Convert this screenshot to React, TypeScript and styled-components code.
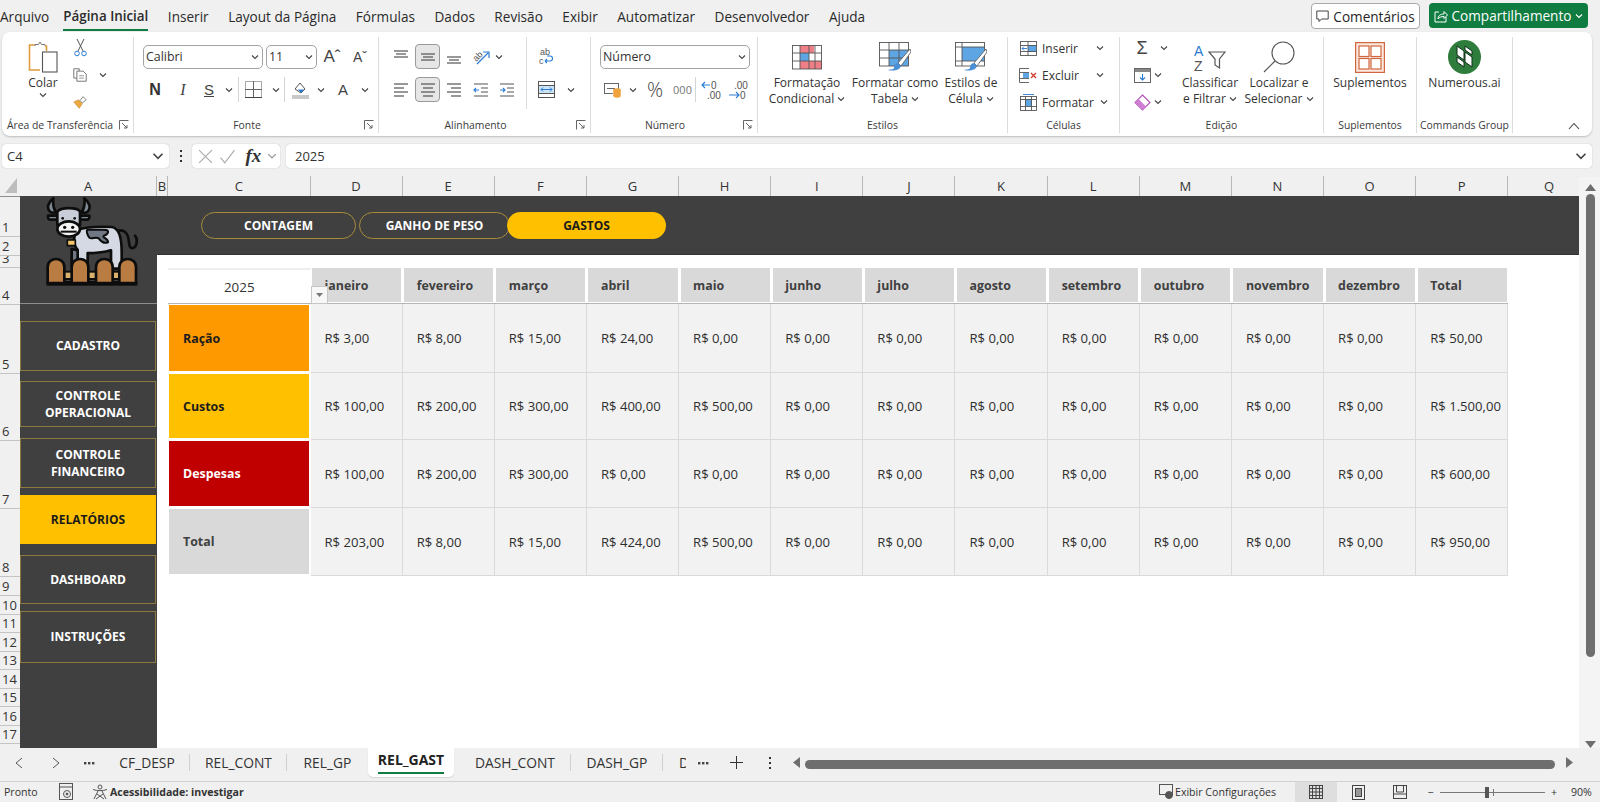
import React from "react";
import styled, { createGlobalStyle } from "styled-components";

const UI = '"Open Sans", "Noto Sans", "Liberation Sans", sans-serif';

const Global = createGlobalStyle`
  html, body { margin: 0; padding: 0; background: #f0f0f0; }
  #root { width: 1600px; height: 802px; overflow: hidden; }
  * { box-sizing: border-box; }
`;

const Page = styled.div`
  width: 1600px; height: 802px; display: flex; flex-direction: column;
  background: #f0f0f0; font-family: ${UI}; color: #262626; overflow: hidden;
`;

/* ---------- title tabs ---------- */
const MenuBar = styled.div`
  height: 32px; display: flex; align-items: flex-start; justify-content: space-between; padding-right: 12px;
`;
const MenuList = styled.div`display: flex; gap: 19.5px; height: 32px;`;
const MenuItem = styled.div<{ $active?: boolean }>`
  height: 31px; line-height: 33px; font-size: ${p => (p.$active ? 13.4 : 13.6)}px; white-space: nowrap;
  font-weight: ${p => (p.$active ? 600 : 400)};
  border-bottom: ${p => (p.$active ? "2px solid #107c41" : "2px solid transparent")};
  color: #2b2b2b;
  &:first-child { margin-right: -5.5px; }
`;
const MenuActions = styled.div`display: flex; gap: 9px; padding-top: 3px;`;
const CommentBtn = styled.div`
  width: 109px; height: 26px; border: 1px solid #a9a9a9; border-radius: 4px; background: #fff;
  display: flex; align-items: center; justify-content: center; gap: 4px; font-size: 13.6px;
`;
const ShareBtn = styled.div`
  width: 159px; height: 25px; border-radius: 4px; background: #107c41; color: #fff;
  display: flex; align-items: center; justify-content: center; gap: 4px; font-size: 13.6px;
`;

/* ---------- ribbon ---------- */
const Ribbon = styled.div`
  margin: 0 8px 0 2px; height: 104px; background: #fff; border-radius: 8px;
  box-shadow: 0 1px 2px rgba(0,0,0,.22); display: flex; padding-top: 5px;
`;
const Group = styled.div<{ $w: number; $last?: boolean }>`
  width: ${p => p.$w}px; height: 96px; display: flex; flex-direction: column;
  border-right: ${p => (p.$last ? "none" : "1px solid #dcdcdc")}; flex: none;
`;
const GroupBody = styled.div`flex: 1; display: flex; min-height: 0;`;
const GroupFoot = styled.div<{ $pl?: number }>`height: 16px; display: flex; align-items: center; padding-left: ${p => p.$pl || 0}px;`;
const GroupLabel = styled.div`
  flex: 1; text-align: center; font-size: 10.4px; color: #3a3a3a; white-space: nowrap; line-height: 17px;
`;
const LauncherBox = styled.div`width: 18px; display: flex; justify-content: center; align-items: center;`;
const Large = styled.div<{ $w: number; $pl?: number }>`
  width: ${p => p.$w}px; flex: none; display: flex; flex-direction: column; align-items: center; padding-top: 2px;
  padding-left: ${p => p.$pl || 0}px;
`;
const LargeIcon = styled.div`height: 36px; display: flex; align-items: center; justify-content: center;`;
const LargeText = styled.div`
  font-size: 12px; line-height: 16px; white-space: nowrap; color: #333; display: flex; align-items: center; gap: 3px;
`;
const Stack = styled.div<{ $w: number; $pl?: number }>`
  width: ${p => p.$w}px; flex: none; display: flex; flex-direction: column; gap: 5px; padding-left: ${p => p.$pl || 0}px;
`;
const StackRow = styled.div`height: 22px; display: flex; align-items: center;`;
const StackText = styled.span<{ $w: number }>`
  width: ${p => p.$w}px; font-size: 12px; color: #333; white-space: nowrap;
`;
const Rows = styled.div<{ $w?: number; $pl?: number; $sep?: boolean }>`
  width: ${p => (p.$w ? `${p.$w}px` : "auto")}; flex: none; display: flex; flex-direction: column; gap: 8px;
  padding-top: 7px; padding-left: ${p => p.$pl || 0}px;
  border-right: ${p => (p.$sep ? "1px solid #dcdcdc" : "none")}; height: 72px;
`;
const ToolRow = styled.div`height: 25px; display: flex; align-items: center;`;
const Slot = styled.div<{ $w: number; $on?: boolean; $sep?: boolean }>`
  width: ${p => p.$w}px; height: 25px; flex: none; display: flex; align-items: center; justify-content: center;
  font-size: 14px; color: #333;
  border: ${p => (p.$on ? "1px solid #9a9a9a" : "none")};
  background: ${p => (p.$on ? "#e6e6e6" : "transparent")};
  border-radius: ${p => (p.$on ? "4px" : "0")};
  border-right: ${p => (p.$sep ? "1px solid #d4d4d4" : undefined)};
`;
const Select = styled.div<{ $w: number; $mr?: number }>`
  width: ${p => p.$w}px; height: 24px; margin-right: ${p => p.$mr || 0}px; flex: none;
  border: 1px solid #a3a3a3; border-radius: 5px; background: #fff; display: flex; align-items: center;
  justify-content: space-between; padding: 0 3px 0 2px; font-size: 12.4px; color: #333;
`;
const BoldLetter = styled.span`font-family: "Liberation Sans", sans-serif; font-weight: 700; font-size: 16px; color: #333;`;
const ItalicLetter = styled.span`font-family: "Liberation Serif", serif; font-style: italic; font-size: 16px; color: #444;`;
const UnderLetter = styled.span`font-family: "Liberation Sans", sans-serif; text-decoration: underline; font-size: 15px; color: #444;`;
const BigA = styled.span<{ $s: number }>`font-family: "Liberation Sans", sans-serif; font-size: ${p => p.$s}px; color: #444;`;
const Pct = styled.span`font-size: 20px; color: #444; font-weight: 300;`;
const Zeros = styled.span`font-size: 11px; color: #777;`;
const Collapse = styled.div`
  flex: 1; height: 96px; display: flex; align-items: flex-end; justify-content: flex-end; padding: 0 12px 3px 0;
`;

/* ---------- formula bar ---------- */
const FormulaBar = styled.div`height: 24px; margin: 8px 8px 8px 2px; display: flex; align-items: stretch;`;
const FieldBox = styled.div<{ $w?: number; $pl?: number }>`
  width: ${p => (p.$w ? `${p.$w}px` : "auto")}; flex: ${p => (p.$w ? "none" : 1)};
  background: #fff; border-radius: 4px; box-shadow: 0 0 1px rgba(0,0,0,.35);
  display: flex; align-items: center; justify-content: space-between; padding: 0 5px 0 ${p => p.$pl || 5}px; font-size: 13px; color: #333;
`;
const Dots = styled.div`width: 23px; display: flex; align-items: center; justify-content: center;`;
const FxBox = styled(FieldBox)`margin-right: 6px; padding: 0 3px 0 6px;`;
const Fx = styled.span`font-family: "Liberation Serif", serif; font-style: italic; font-weight: 700; font-size: 19px; color: #333; margin-left: 4px;`;

/* ---------- sheet ---------- */
const ColHeads = styled.div`height: 20px; display: flex; padding-right: 10px;`;
const Corner = styled.div`width: 20px; flex: none; display: flex; align-items: flex-end; justify-content: flex-end; padding: 0 3px 3px 0;`;
const ColHead = styled.div<{ $w: number; $flex?: boolean }>`
  width: ${p => p.$w}px; flex: ${p => (p.$flex ? 1 : "none")};
  text-align: center; font-size: 13px; line-height: 20px; color: #333;
  border-right: ${p => (p.$flex ? "none" : "1px solid #b8b8b8")};
`;
const SheetRow = styled.div`height: 552px; display: flex; border-top: 1px solid #8e8e8e;`;
const RowHeads = styled.div`width: 20px; flex: none; display: flex; flex-direction: column;`;
const RowHead = styled.div<{ $h: number }>`
  height: ${p => p.$h}px; flex: none; border-bottom: 1px solid #c4c4c4; font-size: 13px; line-height: 15px;
  padding: 0 0 1px 2px; display: flex; align-items: flex-end; color: #333; overflow: hidden; text-align: left;
`;
const Sheet = styled.div`width: 1559px; flex: none; display: flex; background: #fff; margin-top: -1px;`;
const Side = styled.div`width: 137px; flex: none; background: #404040; display: flex; flex-direction: column;`;
const LogoCell = styled.div`height: 108px; flex: none; border-bottom: 1px solid #8d8d8d; padding: 1px 0 0 10px;`;
const NavItem = styled.div<{ $h: number; $mt: number; $on?: boolean }>`
  height: ${p => p.$h}px; margin-top: ${p => p.$mt}px; width: 136px; flex: none;
  border: ${p => (p.$on ? "none" : "1px solid #8c7a3e")};
  background: ${p => (p.$on ? "#ffc000" : "#404040")};
  color: ${p => (p.$on ? "#1a1a1a" : "#fff")};
  display: flex; align-items: center; justify-content: center; text-align: center; padding-top: 1px;
  font-weight: 700; font-size: 12px; line-height: 16.5px; white-space: pre-line;
`;
const Main = styled.div`flex: 1; min-width: 0; display: flex; flex-direction: column;`;
const Banner = styled.div`
  height: 59px; flex: none; background: #404040; border-bottom: 1px solid #333; display: flex; align-items: center; padding-left: 44px;
`;
const Pill = styled.div<{ $w: number; $on?: boolean }>`
  width: ${p => p.$w}px; height: 27px; border-radius: 14px; flex: none;
  border: ${p => (p.$on ? "none" : "1px solid #a88c3a")};
  background: ${p => (p.$on ? "#ffc000" : "#404040")};
  color: ${p => (p.$on ? "#1a1a1a" : "#fff")};
  display: flex; align-items: center; justify-content: center; font-weight: 700; font-size: 12px;
  margin-right: ${p => (p.$on ? 0 : 3)}px;
  margin-left: ${p => (p.$on ? -6 : 0)}px;
  z-index: ${p => (p.$on ? 1 : 0)};
`;
const Table = styled.div`
  display: grid; grid-template-columns: 142.5px repeat(13, 92.15px); grid-template-rows: 13px 36px 69px 67px 68px 68px;
  margin-left: 11px; position: relative;
`;
const TopGap = styled.div`grid-column: 1 / -1;`;
const YearCell = styled.div`
  border-top: 2px solid #eeeeee; display: flex; align-items: center; justify-content: center; font-size: 13.4px; color: #333;
  border-bottom: 1px solid #b5b5b5;
`;
const MonthWrap = styled.div`border-bottom: 1px solid #b5b5b5; padding: 0 1.5px 1px; display: flex;`;
const Month = styled.div`
  flex: 1; background: #d9d9d9; display: flex; align-items: center; padding-left: 12.5px;
  font-size: 12.4px; font-weight: 700; color: #404040; white-space: nowrap;
`;
const FilterBtn = styled.div`
  position: absolute; left: 142.5px; top: 31px; width: 17px; height: 18px; background: #f7f7f7;
  border: 1px solid #c6c6c6; display: flex; align-items: center; justify-content: center; z-index: 2;
`;
const LabelWrap = styled.div`padding: 1px 1.5px 2px 1px; display: flex; background: #fff;`;
const Label = styled.div<{ $bg: string; $fg: string }>`
  flex: 1; background: ${p => p.$bg}; color: ${p => p.$fg}; display: flex; align-items: center; padding-left: 14px;
  font-size: 12.4px; font-weight: 700;
`;
const Cell = styled.div`
  background: #f2f2f2; border-right: 1px solid #dadada; border-bottom: 1px solid #dadada;
  display: flex; align-items: center; padding-left: 14px; font-size: 13.1px; color: #2e2e2e; white-space: nowrap;
`;
const Scroll = styled.div`
  width: 21px; flex: none; background: #f4f4f4; margin-top: -20px; display: flex; flex-direction: column; align-items: center; padding: 7px 0 0 1px;
`;
const VThumb = styled.div`width: 9px; height: 463px; background: #6e6e6e; border-radius: 5px; margin-top: 3px;`;
const ScrollSpace = styled.div`flex: 1;`;

/* ---------- tabs + status ---------- */
const TabBar = styled.div`height: 34px; display: flex; align-items: flex-start; border-bottom: 1px solid #d2d2d2;`;
const TabSlot = styled.div<{ $w: number }>`
  width: ${p => p.$w}px; height: 29px; flex: none; display: flex; align-items: center; justify-content: center; color: #444;
`;
const SheetTab = styled.div<{ $w: number; $sep?: boolean; $pl?: number; $start?: boolean }>`
  width: ${p => p.$w}px; height: 29px; flex: none; display: flex; align-items: center;
  justify-content: ${p => (p.$start ? "flex-start" : "center")}; padding-left: ${p => p.$pl || 0}px;
  font-size: 13.8px; color: #333; position: relative; overflow: hidden;
  &::after { content: ""; position: absolute; right: 0; top: 6px; bottom: 6px; width: 1px; background: ${p => (p.$sep ? "#d0d0d0" : "transparent")}; }
`;
const ActiveTab = styled.div<{ $w: number }>`
  width: ${p => p.$w}px; height: 29px; flex: none; background: #fff; border-radius: 0 0 5px 5px; display: flex; justify-content: center;
  box-shadow: 0 1px 1px rgba(0,0,0,.12);
`;
const ActiveLabel = styled.div`
  height: 26px; line-height: 24px; font-size: 14px; font-weight: 700; color: #222; border-bottom: 2px solid #107c41;
`;
const HThumb = styled.div`width: 750px; flex: none; height: 9px; border-radius: 5px; background: #6e6e6e; margin-top: 12px;`;
const StatusBar = styled.div`height: 20px; display: flex; align-items: center; font-size: 10.6px; color: #333; padding-left: 4px;`;
const StatusText = styled.span<{ $bold?: boolean; $w?: number }>`
  font-weight: ${p => (p.$bold ? 700 : 400)}; width: ${p => (p.$w ? `${p.$w}px` : "auto")}; flex: none; white-space: nowrap;
`;
const StatusSlot = styled.div<{ $w: number; $on?: boolean }>`
  width: ${p => p.$w}px; height: 20px; flex: none; display: flex; align-items: center; justify-content: center;
  background: ${p => (p.$on ? "#dedede" : "transparent")};
`;
const Spacer = styled.div`flex: 1;`;
const ZoomTrack = styled.div`
  width: 105px; height: 1px; background: #777; position: relative; flex: none;
  &::after { content: ""; position: absolute; left: 53px; top: -3px; width: 1px; height: 7px; background: #777; }
`;
const ZoomThumb = styled.div`position: absolute; left: 45px; top: -5px; width: 4px; height: 11px; background: #555;`;

/* ---------- icons ---------- */
const Chev = ({ s = 8, c = "#444" }: { s?: number; c?: string }) => (
  <svg width={s} height={s} viewBox="0 0 8 8"><path d="M1 2.5 4 5.5 7 2.5" fill="none" stroke={c} strokeWidth="1.1" /></svg>
);
const Launcher = () => (
  <svg width="10" height="10" viewBox="0 0 10 10" fill="none" stroke="#555" strokeWidth=".9">
    <path d="M.5 9.5V.5H9.5" /><path d="M3 3 8 8M8 5V8H5" />
  </svg>
);
const Paste = () => (
  <svg width="30" height="32" viewBox="0 0 30 32" fill="none">
    <path d="M9 4H1.5V29H12" stroke="#e09b3d" strokeWidth="1.6" fill="#fff" />
    <path d="M7 5V3.5h3.5L12 1l1.5 2.5H17V5" stroke="#777" strokeWidth="1" fill="#fff" />
    <path d="M17 5h1.5v5" stroke="#e09b3d" strokeWidth="1.6" />
    <rect x="14.5" y="11" width="14.5" height="20" fill="#fff" stroke="#555" strokeWidth="1.1" />
  </svg>
);
const Scissors = () => (
  <svg width="13" height="18" viewBox="0 0 13 18" fill="none" stroke="#555" strokeWidth="1">
    <path d="M3 0 9 12M10 0 4 12" /><circle cx="3" cy="14.5" r="2.3" stroke="#2b7cd3" /><circle cx="10" cy="14.5" r="2.3" stroke="#2b7cd3" />
  </svg>
);
const Copy = () => (
  <svg width="18" height="18" viewBox="0 0 18 18" fill="none" stroke="#555" strokeWidth="1">
    <path d="M5 13H1V1H8V4" /><path d="M5 4h8l4 4v9H5z" fill="#fff" /><path d="M8 10h6M8 13h6" strokeWidth=".8" />
  </svg>
);
const Painter = () => (
  <svg width="18" height="17" viewBox="0 0 18 17">
    <path d="M1 8 8 16 12 10 7 5z" fill="#eda93f" stroke="#c5812a" strokeWidth=".7" />
    <path d="M9 6 13 1l4 4-5 4z" fill="#fff" stroke="#666" strokeWidth="1" />
  </svg>
);
const Borders = () => (
  <svg width="17" height="17" viewBox="0 0 17 17" fill="none" stroke="#aaa" strokeWidth="1">
    <rect x=".5" y=".5" width="16" height="16" /><path d="M8.5 0V17M0 8.5H17" stroke="#666" /><path d="M0 16.5H17" stroke="#444" />
  </svg>
);
const Fill = () => (
  <svg width="17" height="18" viewBox="0 0 17 18">
    <path d="M3 8 8 2l5 6-4 4z" fill="#fff" stroke="#555" strokeWidth="1" />
    <path d="M6 8.5h6L9 12z" fill="#2b7cd3" />
    <rect x="0" y="14" width="17" height="4" fill="#c9c9c9" />
  </svg>
);
const Lines = ({ kind }: { kind: "c" | "l" | "r" }) => {
  const xs = kind === "c" ? [[1, 15], [3, 13], [1, 15], [3, 13]] : kind === "l" ? [[1, 15], [1, 11], [1, 15], [1, 11]] : [[1, 15], [5, 15], [1, 15], [5, 15]];
  return (
    <svg width="16" height="14" viewBox="0 0 16 14" stroke="#444" strokeWidth="1.1">
      {xs.map((a, i) => <line key={i} x1={a[0]} x2={a[1]} y1={1 + i * 4} y2={1 + i * 4} />)}
    </svg>
  );
};
const AlignV = ({ pos }: { pos: "t" | "m" | "b" }) => {
  const o = pos === "t" ? 1 : pos === "m" ? 4 : 7;
  return (
    <svg width="16" height="14" viewBox="0 0 16 14" stroke="#444" strokeWidth="1.1">
      <line x1="1" x2="15" y1={o} y2={o} /><line x1="3" x2="13" y1={o + 3} y2={o + 3} /><line x1="1" x2="15" y1={o + 6} y2={o + 6} />
    </svg>
  );
};
const Orient = () => (
  <svg width="20" height="18" viewBox="0 0 20 18" fill="none">
    <text x="2" y="12" fontSize="9" fill="#555" fontFamily="Liberation Sans" transform="rotate(-45 6 9)">ab</text>
    <path d="M6 16 17 5M12 4h6v6" stroke="#2b7cd3" strokeWidth="1.2" />
  </svg>
);
const Indent = ({ flip }: { flip?: boolean }) => (
  <svg width="16" height="14" viewBox="0 0 16 14" fill="none" stroke="#555" strokeWidth="1.1">
    <path d="M1 1H15M8 5H15M8 9H15M1 13H15" />
    <path d={flip ? "M1 7H6M4 5l2 2-2 2" : "M1 7H6M3 5 1 7l2 2"} stroke="#2b7cd3" />
  </svg>
);
const Wrap = () => (
  <svg width="16" height="20" viewBox="0 0 16 20" fill="none">
    <text x="2" y="8" fontSize="9" fill="#555" fontFamily="Liberation Sans">ab</text>
    <text x="1" y="17" fontSize="9" fill="#555" fontFamily="Liberation Sans">c</text>
    <path d="M7 14h5a2.5 2.5 0 0 0 0-5H9M7 14l2-2M7 14l2 2" stroke="#2b7cd3" strokeWidth="1.1" />
  </svg>
);
const Merge = () => (
  <svg width="17" height="17" viewBox="0 0 17 17" fill="none" stroke="#555">
    <rect x=".5" y=".5" width="16" height="16" /><path d="M0 4.5H17M0 12.5H17" />
    <rect x="1" y="5" width="15" height="7" fill="#cde3f6" stroke="none" />
    <path d="M3 8.5H14M5 6.5 3 8.5l2 2M12 6.500l2 2-2 2" stroke="#2b7cd3" />
  </svg>
);
const Currency = () => (
  <svg width="18" height="18" viewBox="0 0 18 18" fill="none">
    <rect x=".5" y="2.500" width="14" height="10" stroke="#666" /><path d="M3 7.500h8" stroke="#666" />
    <ellipse cx="13" cy="9" rx="4" ry="1.800" fill="#f0a33c" /><path d="M9 9v6c0 1 2 2 4 2s4-1 4-2V9" fill="#f0a33c" stroke="#fff" strokeWidth=".5" />
  </svg>
);
const DecPlaces = ({ inc }: { inc?: boolean }) => (
  <svg width="22" height="20" viewBox="0 0 22 20" fill="none">
    <text x={inc ? 7 : 11} y="9" fontSize="10" fill="#555" fontFamily="Liberation Sans">{inc ? ".00" : "0"}</text>
    <text x={inc ? 13 : 7} y="19" fontSize="10" fill="#555" fontFamily="Liberation Sans">{inc ? "0" : ".00"}</text>
    <path d={inc ? "M2 15H12M9 12l3 3-3 3" : "M2 5H10M5 2 2 5l3 3"} stroke="#2b7cd3" strokeWidth="1.1" />
  </svg>
);
const CondFmt = () => (
  <svg width="30" height="25" viewBox="0 0 30 25">
    <rect x="0" y="0" width="30" height="24" fill="#fff" />
    <rect x="8" y="0" width="14" height="8" fill="#ee7f87" /><rect x="8" y="8" width="9" height="8" fill="#5ea5e3" /><rect x="8" y="16" width="22" height="8" fill="#ee7f87" />
    <g stroke="#555" strokeWidth=".9" fill="none"><rect x=".5" y=".5" width="29" height="23.500" /><path d="M8 0V24M17 0V24M23 0V24M0 8H30M0 16H30" /></g>
  </svg>
);
const TableFmt = () => (
  <svg width="32" height="30" viewBox="0 0 32 30">
    <rect x="10" y="8" width="19" height="16" fill="#5ea5e3" />
    <g stroke="#555" strokeWidth=".9" fill="none"><rect x=".5" y=".5" width="29" height="23.500" /><path d="M10 0V24M20 0V24M0 8H30M0 16H30" /></g>
    <path d="M31 7 19 21l3 3L32 10z" fill="#fff" stroke="#555" strokeWidth=".8" />
    <path d="M9 28c3 1 9 1 12-2l1-2-3-3c-3 0-4 3-4 5 0 1-3 1.500-6 2z" fill="#4a90d6" />
  </svg>
);
const CellStyle = () => (
  <svg width="32" height="30" viewBox="0 0 32 30">
    <rect x="7" y="5" width="22" height="14" fill="#5ea5e3" />
    <g stroke="#555" strokeWidth=".9" fill="none"><rect x=".5" y=".5" width="29" height="23.500" /><path d="M7 0V24M0 5H30M0 19H30" /></g>
    <path d="M31 7 19 21l3 3L32 10z" fill="#fff" stroke="#555" strokeWidth=".8" />
    <path d="M9 28c3 1 9 1 12-2l1-2-3-3c-3 0-4 3-4 5 0 1-3 1.500-6 2z" fill="#4a90d6" />
  </svg>
);
const InsertCell = () => (
  <svg width="17" height="15" viewBox="0 0 17 15" fill="none" stroke="#555" strokeWidth=".9">
    <rect x=".5" y=".5" width="16" height="14" /><rect x="8" y="4" width="8" height="7" fill="#5ea5e3" stroke="none" /><path d="M0 4.500H17M0 10.500H17M8 0V15" />
    <path d="M2 7.500H7M4 5.500l-2 2 2 2" stroke="#2b7cd3" />
  </svg>
);
const DeleteCell = () => (
  <svg width="18" height="15" viewBox="0 0 18 15" fill="none" stroke="#555" strokeWidth=".9">
    <path d="M10 .5H.5V14.500H10M0 4.500H10M0 10.500H10" /><rect x="4" y="5" width="6" height="5" fill="#5ea5e3" stroke="none" />
    <path d="M12 5l5 5M17 5l-5 5" stroke="#d4392f" strokeWidth="1.3" />
  </svg>
);
const FormatCell = () => (
  <svg width="17" height="17" viewBox="0 0 17 17" fill="none" stroke="#555" strokeWidth=".9">
    <rect x="5" y="5" width="7" height="7" fill="#5ea5e3" stroke="none" />
    <rect x=".5" y="2.500" width="16" height="14" /><path d="M0 5.500H17M0 12.500H17M5.500 2V17M11.500 2V17" /><path d="M3 .5H14" stroke="#2b7cd3" />
  </svg>
);
const FillDown = () => (
  <svg width="17" height="15" viewBox="0 0 17 15" fill="none">
    <rect x=".5" y=".5" width="16" height="14" stroke="#666" /><rect x="1" y="1" width="15" height="3" fill="#888" />
    <path d="M8.500 6v6M6 9.500l2.500 2.500L11 9.500" stroke="#2b7cd3" strokeWidth="1.1" />
  </svg>
);
const Eraser = () => (
  <svg width="17" height="17" viewBox="0 0 17 17">
    <path d="M8.500 1 16 8.500 8.500 16 1 8.500z" fill="#fff" stroke="#b253b8" strokeWidth="1.1" />
    <path d="M4.500 5 12 12.500 8.500 16 1 8.500z" fill="#cf7fd3" />
  </svg>
);
const Sort = () => (
  <svg width="32" height="31" viewBox="0 0 32 31" fill="none">
    <text x="0" y="14" fontSize="14" fill="#2b7cd3" fontFamily="Liberation Sans">A</text>
    <text x="0" y="29" fontSize="14" fill="#555" fontFamily="Liberation Sans">Z</text>
    <path d="M15 10H31L25.500 17V26L21 23V17z" stroke="#555" strokeWidth="1.2" />
  </svg>
);
const Search = () => (
  <svg width="33" height="32" viewBox="0 0 33 32" fill="none" stroke="#555" strokeWidth="1.1">
    <circle cx="20" cy="12" r="11" /><path d="M12 20 1 31" />
  </svg>
);
const Addins = () => (
  <svg width="30" height="31" viewBox="0 0 30 31" fill="none" stroke="#d0663f" strokeWidth="1.2">
    <rect x=".6" y=".6" width="28.800" height="29.800" fill="#fbe8df" stroke="#d0663f" />
    <rect x="4" y="4" width="10" height="10.500" fill="#fff" /><rect x="16" y="4" width="10" height="10.500" fill="#fff" />
    <rect x="4" y="16.500" width="10" height="10.500" fill="#fff" /><rect x="16" y="16.500" width="10" height="10.500" fill="#fff" />
  </svg>
);
const Numerous = () => (
  <svg width="33" height="34" viewBox="0 0 33 34">
    <ellipse cx="16.500" cy="17" rx="16.500" ry="17" fill="#2f7d3c" />
    <g fill="none" stroke="#0f2d16" strokeWidth="1">
      <path d="M9 6 16 11V20L9 15z" fill="#fff" /><path d="M17 12 24 17V27L17 22z" fill="#fff" />
      <path d="M17 6 24 11V15L17 10z" fill="#fff" /><path d="M9 17 16 22V27L9 22z" fill="#fff" />
    </g>
  </svg>
);
const Comment = ({ c = "#444" }: { c?: string }) => (
  <svg width="13" height="13" viewBox="0 0 13 13" fill="none" stroke={c} strokeWidth="1"><path d="M.8 1H12.200V9H5.500L3 11.600V9H.8z" /></svg>
);
const Share = () => (
  <svg width="14" height="14" viewBox="0 0 14 14" fill="none" stroke="#fff" strokeWidth="1"><path d="M5 3H1V13H12V8" /><path d="M4 10c0-3 2-5 6-5V2.500L13.500 6 10 9.500V7.500c-3 0-5 1-6 2.500z" /></svg>
);
const X = () => <svg width="15" height="15" viewBox="0 0 14 14" stroke="#a8a8a8" strokeWidth="1"><path d="M1 1 13 13M13 1 1 13" /></svg>;
const Check = () => <svg width="17" height="15" viewBox="0 0 15 14" fill="none" stroke="#a8a8a8" strokeWidth="1"><path d="M1 8 5 13 14 1" /></svg>;
const VDots = ({ c = "#333" }: { c?: string }) => (
  <svg width="4" height="12" viewBox="0 0 4 12" fill={c}><rect x="1" y="0" width="2" height="2" /><rect x="1" y="5" width="2" height="2" /><rect x="1" y="10" width="2" height="2" /></svg>
);
const HDots = () => (
  <svg width="11" height="4" viewBox="0 0 11 4" fill="#444"><rect x="0" y="1" width="2.400" height="2.400" /><rect x="4" y="1" width="2.400" height="2.400" /><rect x="8" y="1" width="2.400" height="2.400" /></svg>
);
const Tri = ({ dir, c = "#6e6e6e" }: { dir: "u" | "d" | "l" | "r" | "c"; c?: string }) => {
  const d = { u: "M0 7 5.500 0 11 7z", d: "M0 0 5.500 7 11 0z", l: "M7 0V11L0 5.500z", r: "M0 0V11L7 5.500z", c: "M12 0V15H0z" }[dir];
  return <svg width={dir === "c" ? 12 : dir === "u" || dir === "d" ? 11 : 7} height={dir === "c" ? 15 : dir === "u" || dir === "d" ? 7 : 11}><path d={d} fill={c} /></svg>;
};
const SmallTri = () => <svg width="7" height="4"><path d="M0 0H7L3.500 4z" fill="#777" /></svg>;
const NavArrow = ({ right }: { right?: boolean }) => (
  <svg width="8" height="12" viewBox="0 0 8 12" fill="none" stroke="#555" strokeWidth="1"><path d={right ? "M1 1 7 6 1 11" : "M7 1 1 6 7 11"} /></svg>
);
const SheetView = () => (
  <svg width="15" height="18" viewBox="0 0 15 18" fill="none" stroke="#555" strokeWidth="1"><rect x=".5" y=".5" width="13" height="16" /><path d="M0 4H14" /><circle cx="8" cy="11" r="3.500" /><circle cx="8" cy="11" r="1" fill="#555" /></svg>
);
const Access = () => (
  <svg width="16" height="16" viewBox="0 0 16 16" fill="none" stroke="#555" strokeWidth="1"><circle cx="8" cy="3" r="2" /><path d="M1 5.500c4 1.500 10 1.500 14 0M6 7l-4 8M10 7l4 8M5 10l7 5M11 10l-7 5" /></svg>
);
const ViewCfg = () => (
  <svg width="15" height="16" viewBox="0 0 15 16" fill="none" stroke="#555" strokeWidth="1"><rect x=".5" y=".5" width="13" height="10" /><circle cx="10" cy="11" r="3.500" fill="#555" /></svg>
);
const NormalView = () => (
  <svg width="14" height="14" viewBox="0 0 14 14" fill="none" stroke="#444" strokeWidth="1"><rect x=".5" y=".5" width="13" height="13" /><path d="M0 3.500H14M0 7H14M0 10.500H14M3.500 0V14M7 0V14M10.500 0V14" /></svg>
);
const PageView = () => (
  <svg width="13" height="15" viewBox="0 0 13 15" fill="none" stroke="#444" strokeWidth="1"><rect x=".5" y=".5" width="12" height="14" /><rect x="3.500" y="3.500" width="6" height="8" fill="#999" /></svg>
);
const BreakView = () => (
  <svg width="14" height="14" viewBox="0 0 14 14" fill="none" stroke="#444" strokeWidth="1"><rect x=".5" y=".5" width="13" height="13" /><path d="M3.500 0V7H10.500V0M0 9H14" /></svg>
);
const Cow = () => (
  <svg width="120" height="96" viewBox="0 14 360 288">
    <g stroke="#0d0d0d" strokeWidth="8" strokeLinejoin="round" strokeLinecap="round">
      <path d="M265 115c20-5 30 10 32 35 2 25 18 20 22 5 2-8 0-20-4-25" fill="none" />
      <path d="M125 170v50h25v-45z" fill="#6f7884" />
      <path d="M140 112c30-8 70-10 105-8 25 3 30 45 30 75v50h-32v-55c-15 5-60 10-70 8v50h-30v-60c-12-10-15-40-3-60z" fill="#d5d9e3" />
      <path d="M172 112h50c20 0 12 14 0 18-8 6 14 8 12 20-14 6-22-4-28-12-8-6-22 4-28-2-6-8-10-20-6-24z" fill="#6f7884" strokeWidth="6" />
      <path d="M70 18c-14 10-22 28-10 40 6 4 12 4 18 2-8-12-10-26-8-42z" fill="#808a94" />
      <path d="M163 18c14 10 22 28 10 40-6 4-12 4-18 2 8-12 10-26 8-42z" fill="#808a94" />
      <path d="M54 70h28v12H62c-6 0-10-6-8-12zM178 70h-28v12h20c6 0 10-6 8-12z" fill="#808a94" />
      <path d="M82 58c10-14 60-14 68 0v40H82z" fill="#c8cdd8" />
      <ellipse cx="116" cy="110" rx="34" ry="23" fill="#f4f4f4" />
      <rect x="112" y="143" width="24" height="17" fill="#f2c66a" strokeWidth="5" />
    </g>
    <circle cx="104" cy="105" r="5" fill="#0d0d0d" /><circle cx="128" cy="105" r="5" fill="#0d0d0d" />
    <circle cx="98" cy="78" r="4" fill="#0d0d0d" /><circle cx="134" cy="78" r="4" fill="#0d0d0d" />
    <path d="M92 118h48" stroke="#0d0d0d" strokeWidth="6" />
    <rect x="50" y="266" width="272" height="14" fill="#0d0d0d" />
    <rect x="100" y="238" width="30" height="22" fill="#d9b06c" stroke="#0d0d0d" strokeWidth="6" />
    <rect x="172" y="238" width="30" height="22" fill="#d9b06c" stroke="#0d0d0d" strokeWidth="6" />
    <rect x="242" y="238" width="30" height="22" fill="#d9b06c" stroke="#0d0d0d" strokeWidth="6" />
    {[53, 125, 198, 268].map(x => (
      <path key={x} d={`M${x} 272v-48c0-32 50-32 50 0v48z`} fill="#b97c43" stroke="#0d0d0d" strokeWidth="8" />
    ))}
  </svg>
);

/* ---------- data ---------- */
const menu = ["Arquivo", "Página Inicial", "Inserir", "Layout da Página", "Fórmulas", "Dados", "Revisão", "Exibir", "Automatizar", "Desenvolvedor", "Ajuda"];
const columns: [string, number][] = [["A", 137], ["B", 11], ["C", 142.5], ...("DEFGHIJKLMNOP".split("").map(c => [c, 92.15] as [string, number]))];
const rowHeads: [string, number][] = [["1", 40], ["2", 19], ["3", 12], ["4", 37], ["5", 69], ["6", 67], ["7", 68], ["8", 68], ["9", 19], ["10", 19], ["11", 18], ["12", 19], ["13", 18], ["14", 19], ["15", 18], ["16", 19], ["17", 18]];
const months = ["janeiro", "fevereiro", "março", "abril", "maio", "junho", "julho", "agosto", "setembro", "outubro", "novembro", "dezembro", "Total"];
const z = (n: number) => Array(n).fill("R$ 0,00");
const tableRows = [
  { name: "Ração", bg: "#ff9900", fg: "#1c1c1c", v: ["R$ 3,00", "R$ 8,00", "R$ 15,00", "R$ 24,00", ...z(8), "R$ 50,00"] },
  { name: "Custos", bg: "#ffc000", fg: "#1c1c1c", v: ["R$ 100,00", "R$ 200,00", "R$ 300,00", "R$ 400,00", "R$ 500,00", ...z(7), "R$ 1.500,00"] },
  { name: "Despesas", bg: "#c00000", fg: "#fff", v: ["R$ 100,00", "R$ 200,00", "R$ 300,00", ...z(9), "R$ 600,00"] },
  { name: "Total", bg: "#d9d9d9", fg: "#404040", v: ["R$ 203,00", "R$ 8,00", "R$ 15,00", "R$ 424,00", "R$ 500,00", ...z(7), "R$ 950,00"] },
];
const nav = [
  { t: "CADASTRO", h: 50, mt: 17 },
  { t: "CONTROLE\nOPERACIONAL", h: 46, mt: 10 },
  { t: "CONTROLE\nFINANCEIRO", h: 50, mt: 11 },
  { t: "RELATÓRIOS", h: 49, mt: 7, on: true },
  { t: "DASHBOARD", h: 49, mt: 11 },
  { t: "INSTRUÇÕES", h: 52, mt: 7 },
];

const GroupFooter = ({ text, launcher, pl }: { text: string; launcher?: boolean; pl?: number }) => (
  <GroupFoot $pl={pl}>
    <GroupLabel>{text}</GroupLabel>
    {launcher && <LauncherBox><Launcher /></LauncherBox>}
  </GroupFoot>
);

export default function App() {
  return (
    <Page>
      <Global />
      <MenuBar>
        <MenuList>
          {menu.map(m => <MenuItem key={m} $active={m === "Página Inicial"}>{m}</MenuItem>)}
        </MenuList>
        <MenuActions>
          <CommentBtn><Comment />Comentários</CommentBtn>
          <ShareBtn><Share />Compartilhamento<Chev c="#fff" /></ShareBtn>
        </MenuActions>
      </MenuBar>

      <Ribbon>
        <Group $w={132}>
          <GroupBody>
            <Large $w={71} $pl={11}>
              <LargeIcon><Paste /></LargeIcon>
              <LargeText>Colar</LargeText>
              <LargeText><Chev /></LargeText>
            </Large>
            <Stack $w={60}>
              <StackRow><Slot $w={14}><Scissors /></Slot></StackRow>
              <StackRow><Slot $w={14}><Copy /></Slot><Slot $w={32}><Chev /></Slot></StackRow>
              <StackRow><Slot $w={14}><Painter /></Slot></StackRow>
            </Stack>
          </GroupBody>
          <GroupFooter text="Área de Transferência" launcher pl={3} />
        </Group>

        <Group $w={245}>
          <GroupBody>
            <Rows $pl={9}>
              <ToolRow>
                <Select $w={120} $mr={3}>Calibri<Chev /></Select>
                <Select $w={51}>11<Chev /></Select>
                <Slot $w={30}><BigA $s={17}>Aˆ</BigA></Slot>
                <Slot $w={26}><BigA $s={14}>Aˇ</BigA></Slot>
              </ToolRow>
              <ToolRow>
                <Slot $w={24}><BoldLetter>N</BoldLetter></Slot>
                <Slot $w={32}><ItalicLetter>I</ItalicLetter></Slot>
                <Slot $w={20}><UnderLetter>S</UnderLetter></Slot>
                <Slot $w={20} $sep><Chev /></Slot>
                <Slot $w={28}><Borders /></Slot>
                <Slot $w={18} $sep><Chev /></Slot>
                <Slot $w={30}><Fill /></Slot>
                <Slot $w={11}><Chev /></Slot>
                <Slot $w={34}><BigA $s={15}>A</BigA></Slot>
                <Slot $w={10}><Chev /></Slot>
              </ToolRow>
            </Rows>
          </GroupBody>
          <GroupFooter text="Fonte" launcher />
        </Group>

        <Group $w={212}>
          <GroupBody>
            <Rows $w={148} $pl={8} $sep>
              <ToolRow>
                <Slot $w={28}><AlignV pos="t" /></Slot>
                <Slot $w={25} $on><AlignV pos="m" /></Slot>
                <Slot $w={28}><AlignV pos="b" /></Slot>
                <Slot $w={26}><Orient /></Slot>
                <Slot $w={10}><Chev /></Slot>
              </ToolRow>
              <ToolRow>
                <Slot $w={28}><Lines kind="l" /></Slot>
                <Slot $w={25} $on><Lines kind="c" /></Slot>
                <Slot $w={28}><Lines kind="r" /></Slot>
                <Slot $w={26}><Indent /></Slot>
                <Slot $w={26}><Indent flip /></Slot>
              </ToolRow>
            </Rows>
            <Rows $pl={6}>
              <ToolRow><Slot $w={26}><Wrap /></Slot></ToolRow>
              <ToolRow><Slot $w={26}><Merge /></Slot><Slot $w={24}><Chev /></Slot></ToolRow>
            </Rows>
          </GroupBody>
          <GroupFooter text="Alinhamento" launcher />
        </Group>

        <Group $w={167}>
          <GroupBody>
            <Rows $pl={9}>
              <ToolRow><Select $w={150}>Número<Chev /></Select></ToolRow>
              <ToolRow>
                <Slot $w={26}><Currency /></Slot>
                <Slot $w={14}><Chev /></Slot>
                <Slot $w={30}><Pct>%</Pct></Slot>
                <Slot $w={26} $sep><Zeros>000</Zeros></Slot>
                <Slot $w={30}><DecPlaces /></Slot>
                <Slot $w={24}><DecPlaces inc /></Slot>
              </ToolRow>
            </Rows>
          </GroupBody>
          <GroupFooter text="Número" launcher />
        </Group>

        <Group $w={250}>
          <GroupBody>
            <Large $w={98}>
              <LargeIcon><CondFmt /></LargeIcon>
              <LargeText>Formatação</LargeText>
              <LargeText>Condicional <Chev /></LargeText>
            </Large>
            <Large $w={78}>
              <LargeIcon><TableFmt /></LargeIcon>
              <LargeText>Formatar como</LargeText>
              <LargeText>Tabela <Chev /></LargeText>
            </Large>
            <Large $w={74}>
              <LargeIcon><CellStyle /></LargeIcon>
              <LargeText>Estilos de</LargeText>
              <LargeText>Célula <Chev /></LargeText>
            </Large>
          </GroupBody>
          <GroupFooter text="Estilos" />
        </Group>

        <Group $w={112}>
          <GroupBody>
            <Stack $w={111} $pl={11}>
              <StackRow><Slot $w={18}><InsertCell /></Slot><StackText $w={5} /><StackText $w={54}>Inserir</StackText><Chev /></StackRow>
              <StackRow><Slot $w={18}><DeleteCell /></Slot><StackText $w={5} /><StackText $w={54}>Excluir</StackText><Chev /></StackRow>
              <StackRow><Slot $w={18}><FormatCell /></Slot><StackText $w={5} /><StackText $w={58}>Formatar</StackText><Chev /></StackRow>
            </Stack>
          </GroupBody>
          <GroupFooter text="Células" />
        </Group>

        <Group $w={204}>
          <GroupBody>
            <Stack $w={58} $pl={13}>
              <StackRow><Slot $w={18}><BigA $s={18}>Σ</BigA></Slot><Slot $w={26}><Chev /></Slot></StackRow>
              <StackRow><Slot $w={18}><FillDown /></Slot><Slot $w={14}><Chev /></Slot></StackRow>
              <StackRow><Slot $w={18}><Eraser /></Slot><Slot $w={14}><Chev /></Slot></StackRow>
            </Stack>
            <Large $w={64}>
              <LargeIcon><Sort /></LargeIcon>
              <LargeText>Classificar</LargeText>
              <LargeText>e Filtrar <Chev /></LargeText>
            </Large>
            <Large $w={74}>
              <LargeIcon><Search /></LargeIcon>
              <LargeText>Localizar e</LargeText>
              <LargeText>Selecionar <Chev /></LargeText>
            </Large>
          </GroupBody>
          <GroupFooter text="Edição" />
        </Group>

        <Group $w={93}>
          <GroupBody>
            <Large $w={92}>
              <LargeIcon><Addins /></LargeIcon>
              <LargeText>Suplementos</LargeText>
            </Large>
          </GroupBody>
          <GroupFooter text="Suplementos" />
        </Group>

        <Group $w={96}>
          <GroupBody>
            <Large $w={95}>
              <LargeIcon><Numerous /></LargeIcon>
              <LargeText>Numerous.ai</LargeText>
            </Large>
          </GroupBody>
          <GroupFooter text="Commands Group" />
        </Group>

        <Collapse>
          <svg width="12" height="8" viewBox="0 0 12 8" fill="none" stroke="#444" strokeWidth="1.1"><path d="M1 7 6 1.500 11 7" /></svg>
        </Collapse>
      </Ribbon>

      <FormulaBar>
        <FieldBox $w={167}>C4<Chev s={12} /></FieldBox>
        <Dots><VDots /></Dots>
        <FxBox $w={88}>
          <X /><Check /><Fx>fx</Fx><Chev s={10} c="#999" />
        </FxBox>
        <FieldBox $pl={9}><span>2025</span><Chev s={12} /></FieldBox>
      </FormulaBar>

      <ColHeads>
        <Corner><Tri dir="c" c="#bdbdbd" /></Corner>
        {columns.map(([c, w]) => <ColHead key={c} $w={w}>{c}</ColHead>)}
        <ColHead $w={82} $flex>Q</ColHead>
      </ColHeads>

      <SheetRow>
        <RowHeads>
          {rowHeads.map(([n, h]) => <RowHead key={n} $h={h}>{n}</RowHead>)}
        </RowHeads>
        <Sheet>
          <Side>
            <LogoCell><Cow /></LogoCell>
            {nav.map(n => (
              <NavItem key={n.t} $h={n.h} $mt={n.mt} $on={n.on}>{n.t}</NavItem>
            ))}
          </Side>
          <Main>
            <Banner>
              <Pill $w={155}>CONTAGEM</Pill>
              <Pill $w={151}>GANHO DE PESO</Pill>
              <Pill $w={159} $on>GASTOS</Pill>
            </Banner>
            <Table>
              <TopGap />
              <YearCell>2025</YearCell>
              {months.map(m => <MonthWrap key={m}><Month>{m}</Month></MonthWrap>)}
              <FilterBtn><SmallTri /></FilterBtn>
              {tableRows.map(r => (
                <React.Fragment key={r.name}>
                  <LabelWrap><Label $bg={r.bg} $fg={r.fg}>{r.name}</Label></LabelWrap>
                  {r.v.map((v, i) => <Cell key={i}>{v}</Cell>)}
                </React.Fragment>
              ))}
            </Table>
          </Main>
        </Sheet>
        <Scroll>
          <Tri dir="u" />
          <VThumb />
          <ScrollSpace />
          <Tri dir="d" />
        </Scroll>
      </SheetRow>

      <TabBar>
        <TabSlot $w={38}><NavArrow /></TabSlot>
        <TabSlot $w={36}><NavArrow right /></TabSlot>
        <TabSlot $w={30}><HDots /></TabSlot>
        <SheetTab $w={86} $sep>CF_DESP</SheetTab>
        <SheetTab $w={97} $sep>REL_CONT</SheetTab>
        <SheetTab $w={81}>REL_GP</SheetTab>
        <ActiveTab $w={86}><ActiveLabel>REL_GAST</ActiveLabel></ActiveTab>
        <SheetTab $w={117} $sep $pl={5}>DASH_CONT</SheetTab>
        <SheetTab $w={92} $sep>DASH_GP</SheetTab>
        <SheetTab $w={23} $pl={16} $start>D</SheetTab>
        <TabSlot $w={34}><HDots /></TabSlot>
        <TabSlot $w={32}><svg width="13" height="13" stroke="#333"><path d="M6.500 0V13M0 6.500H13" /></svg></TabSlot>
        <TabSlot $w={36}><VDots /></TabSlot>
        <TabSlot $w={17}><Tri dir="l" /></TabSlot>
        <HThumb />
        <TabSlot $w={28}><Tri dir="r" /></TabSlot>
      </TabBar>

      <StatusBar>
        <StatusText $w={51}>Pronto</StatusText>
        <StatusSlot $w={23}><SheetView /></StatusSlot>
        <StatusSlot $w={12} />
        <StatusSlot $w={20}><Access /></StatusSlot>
        <StatusText $bold>Acessibilidade: investigar</StatusText>
        <Spacer />
        <StatusSlot $w={18}><ViewCfg /></StatusSlot>
        <StatusText $w={120}>Exibir Configurações</StatusText>
        <StatusSlot $w={42} $on><NormalView /></StatusSlot>
        <StatusSlot $w={42}><PageView /></StatusSlot>
        <StatusSlot $w={42}><BreakView /></StatusSlot>
        <StatusSlot $w={19}>−</StatusSlot>
        <ZoomTrack><ZoomThumb /></ZoomTrack>
        <StatusSlot $w={18}>+</StatusSlot>
        <StatusSlot $w={8} />
        <StatusText $w={29}>90%</StatusText>
      </StatusBar>
    </Page>
  );
}
